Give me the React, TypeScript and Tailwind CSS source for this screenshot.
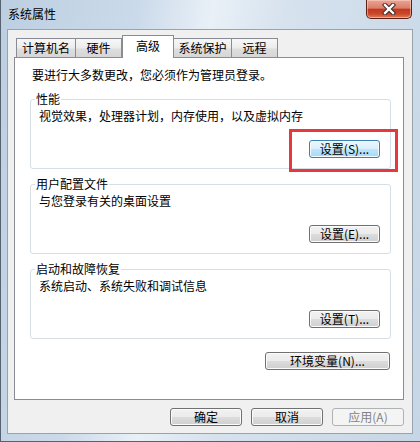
const btnBase =
  'flex h-[18px] items-center justify-center rounded-[3px] border text-[12px] leading-[14px]';

const btnStyles = {
  normal:
    'border-[#707070] bg-[linear-gradient(#f2f2f2_0%,#ebebeb_50%,#dddddd_50%,#cfcfcf_100%)] text-black shadow-[inset_0_0_0_1px_#fbfbfb]',
  focus:
    'border-[#3c7fb1] bg-[linear-gradient(#eaf6fd_0%,#d9f0fc_50%,#bee6fd_50%,#a7d9f5_100%)] text-black shadow-[inset_0_0_0_1px_#f4fbff]',
  disabled: 'border-[#adb2b5] bg-[#f4f4f4] text-[#838383]',
};

function Btn({
  label,
  width,
  variant = 'normal',
}: {
  label: string;
  width: string;
  variant?: 'normal' | 'focus' | 'disabled';
}) {
  return <div className={`${btnBase} ${btnStyles[variant]} ${width}`}>{label}</div>;
}

interface Group {
  title: string;
  text: string;
  button: string;
  focus?: boolean;
}

const groups: Group[] = [
  { title: '性能', text: '视觉效果，处理器计划，内存使用，以及虚拟内存', button: '设置(S)...', focus: true },
  { title: '用户配置文件', text: '与您登录有关的桌面设置', button: '设置(E)...' },
  { title: '启动和故障恢复', text: '系统启动、系统失败和调试信息', button: '设置(T)...' },
];

const tabs = [
  { name: '计算机名', w: 'w-[60px] border-l' },
  { name: '硬件', w: 'w-[46px]' },
  { name: '高级', w: 'w-[52px]', active: true },
  { name: '系统保护', w: 'w-[58px]' },
  { name: '远程', w: 'w-[46px]' },
];

export default function App() {
  return (
    <div className="h-[442px] w-[420px] overflow-hidden border-b border-l border-[#56626f] bg-[linear-gradient(100deg,#bccfe1_0%,#cbdaea_28%,#e9f0f7_43%,#d6e2ee_58%,#c6d6e6_100%)] font-['Noto_Sans_CJK_SC',sans-serif] text-[12px] leading-[14px] text-black">
      {/* title bar */}
      <div className="flex h-[29px] items-start justify-between">
        <div className="pl-[7px] pt-[7px] text-[12px] leading-[14px] text-black">系统属性</div>
        <div className="mr-[8px] flex h-[19px] w-[46px] items-center justify-center rounded-b-[5px] border border-t-0 border-[#5e2014] bg-[linear-gradient(#e9a593_0%,#dc7d6b_45%,#c3391c_52%,#c9492b_78%,#e0805c_100%)] shadow-[inset_0_0_0_1px_rgba(255,220,210,0.5)]">
          <svg width="14" height="12" viewBox="0 0 14 12">
            <path d="M3 2 L11 10 M11 2 L3 10" stroke="#3b2a28" strokeWidth="4.4" strokeLinecap="square" />
            <path d="M3 2 L11 10 M11 2 L3 10" stroke="#ffffff" strokeWidth="2.4" strokeLinecap="square" />
          </svg>
        </div>
      </div>

      {/* client area */}
      <div className="ml-[6px] w-[406px] border border-[#98a3ae] bg-[#f0f0f0] pb-[7px] pt-[5px]">
        {/* tabs */}
        <div className="flex h-[22px] items-end pl-[8px]">
          {tabs.map((t) =>
            t.active ? (
              <div
                key={t.name}
                className={`relative z-10 -mb-[1px] flex h-[23px] items-center justify-center border-x border-t border-[#898c95] bg-white pb-[2px] ${t.w}`}
              >
                {t.name}
              </div>
            ) : (
              <div
                key={t.name}
                className={`flex h-[19px] items-center justify-center border-r border-t border-[#898c95] bg-[linear-gradient(#f7f7f7_0%,#ececec_50%,#dedede_55%,#d6d6d6_100%)] ${t.w}`}
              >
                {t.name}
              </div>
            ),
          )}
        </div>

        {/* panel */}
        <div className="relative ml-[6px] mr-[8px] h-[343px] border border-[#898c95] bg-white pt-[10px]">
          <div className="pl-[17px]">要进行大多数更改，您必须作为管理员登录。</div>

          {groups.map((g, i) => (
            <fieldset
              key={g.title}
              className={`ml-[15px] mr-[12px] rounded-[3px] border border-[#d5dfe5] pb-[10px] pl-[8px] pr-[10px] ${i === 0 ? 'mt-[10px]' : 'mt-[8px]'}`}
            >
              <legend className="-ml-[4px] px-[1px] leading-[14px]">{g.title}</legend>
              <div className="pt-[3px]">{g.text}</div>
              <div className="mt-[17px] flex justify-end">
                <Btn label={g.button} width="w-[71px]" variant={g.focus ? 'focus' : 'normal'} />
              </div>
            </fieldset>
          ))}

          <div className="mr-[13px] mt-[13px] flex justify-end">
            <Btn label="环境变量(N)..." width="w-[125px]" />
          </div>

          {/* red annotation box */}
          <div className="absolute left-[274px] top-[71px] h-[43px] w-[109px] border-[3px] border-[#e5393d]" />
        </div>

        {/* bottom buttons */}
        <div className="mt-[8px] flex justify-end gap-[9px] pr-[8px]">
          <Btn label="确定" width="w-[72px]" />
          <Btn label="取消" width="w-[72px]" />
          <Btn label="应用(A)" width="w-[72px]" variant="disabled" />
        </div>
      </div>
    </div>
  );
}
